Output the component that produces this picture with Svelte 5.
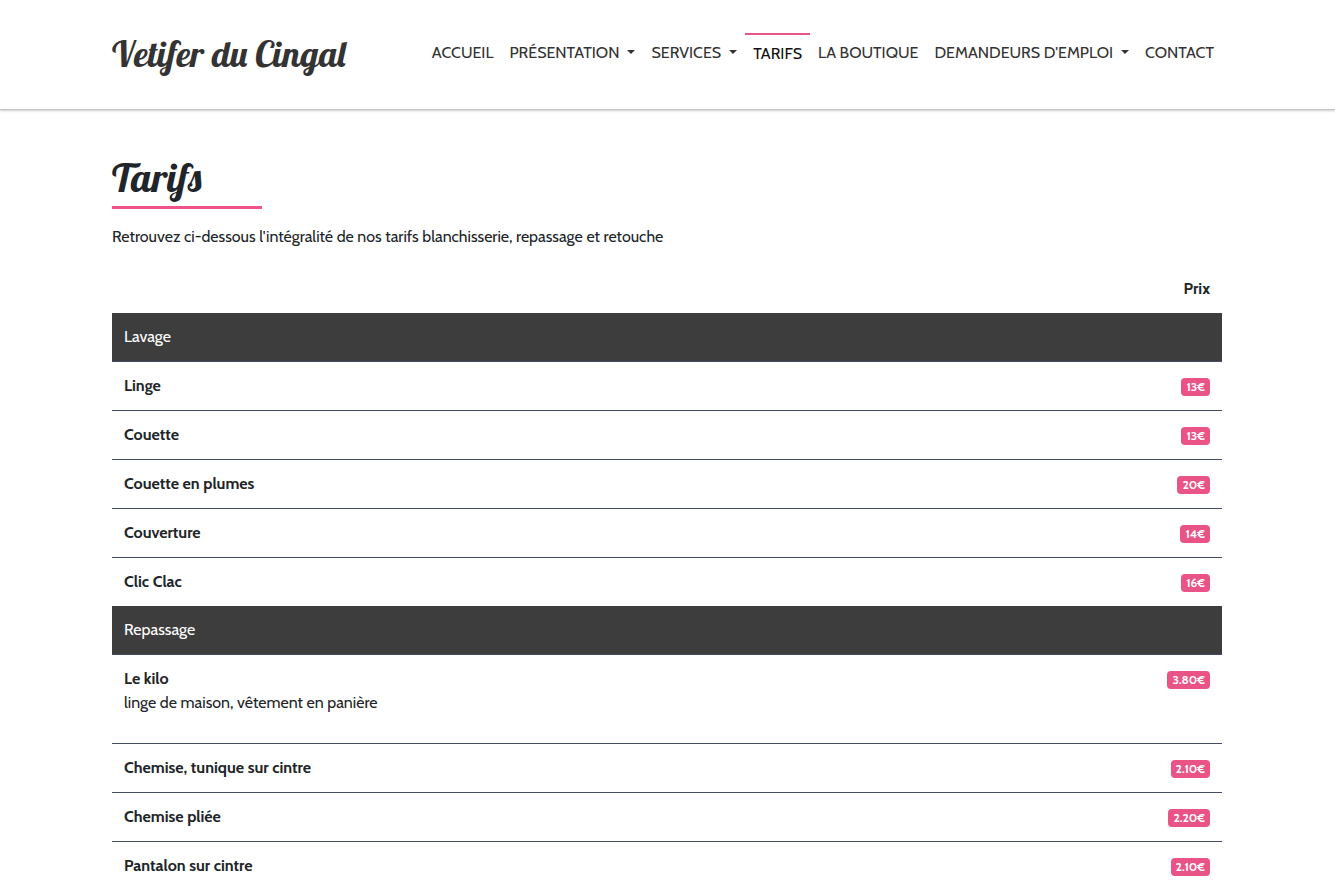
<script>
    const links = [
        { label: 'Accueil' },
        { label: 'Présentation', dropdown: true },
        { label: 'Services', dropdown: true },
        { label: 'Tarifs', active: true },
        { label: 'La boutique' },
        { label: "Demandeurs d'emploi", dropdown: true },
        { label: 'Contact' },
    ]

    const categories = [
        {
            name: 'Lavage',
            items: [
                { name: 'Linge', price: '13€' },
                { name: 'Couette', price: '13€' },
                { name: 'Couette en plumes', price: '20€' },
                { name: 'Couverture', price: '14€' },
                { name: 'Clic Clac', price: '16€' },
            ],
        },
        {
            name: 'Repassage',
            items: [
                { name: 'Le kilo', price: '3.80€', details: 'linge de maison, vêtement en panière' },
                { name: 'Chemise, tunique sur cintre', price: '2.10€' },
                { name: 'Chemise pliée', price: '2.20€' },
                { name: 'Pantalon sur cintre', price: '2.10€' },
            ],
        },
    ]
</script>

<style>
    :global(body) {
        margin: 0;
        background-color: #fff;
        color: #212529;
        font-family: Cabin, Lato, sans-serif;
        font-size: 16px;
        line-height: 24px;
    }

    .container {
        box-sizing: border-box;
        max-width: 1141px;
        margin: 0 auto;
        padding: 0 16px 0 15px;
    }

    .header {
        background-color: #fff;
        border-bottom: 1px solid #c4c4c4;
        box-shadow: 0 1px 2px rgba(0, 0, 0, 0.2);
    }

    .bar {
        display: flex;
        justify-content: space-between;
        align-items: flex-start;
        padding-top: 33px;
        padding-bottom: 35px;
    }

    .brand {
        color: #333;
        font-family: Lobster, "Liberation Serif", serif;
        font-size: 36px;
        line-height: 41px;
        text-decoration: none;
        white-space: nowrap;
    }

    .menu {
        display: flex;
        margin: 0;
        padding: 0;
        list-style: none;
    }

    .link {
        display: block;
        padding: 8px;
        color: #333;
        text-decoration: none;
        text-transform: uppercase;
        white-space: nowrap;
    }

    .active {
        border-top: 2px solid #ea5385;
        padding-top: 7px;
        color: #111;
    }

    .dropdown::after {
        content: "";
        display: inline-block;
        margin-left: 8px;
        vertical-align: 4px;
        border-top: 4px solid;
        border-right: 4px solid transparent;
        border-left: 4px solid transparent;
    }

    .main {
        padding-top: 43px;
    }

    .title {
        margin: 0;
        font-family: Lobster, "Liberation Serif", serif;
        font-size: 40px;
        font-weight: normal;
        line-height: 48px;
    }

    .title::after {
        content: "";
        display: block;
        width: 150px;
        height: 3px;
        margin-top: 5px;
        background-color: #f0528a;
    }

    .intro {
        margin: 16px 0;
    }

    .prices {
        width: 100%;
        border-collapse: collapse;
    }

    th, td {
        padding: 12px;
        text-align: left;
        vertical-align: top;
    }

    tbody th, tbody td {
        border-top: 1px solid #454d62;
    }

    .price {
        text-align: right;
    }

    tbody .category {
        border-top: 0;
        background-color: #3d3d3d;
        color: #fff;
        font-weight: normal;
    }

    .name {
        font-weight: bold;
    }

    .details {
        margin: 0 0 16px;
        font-weight: normal;
    }

    .badge {
        display: inline-block;
        padding: 3px 5px;
        border-radius: 4px;
        background-color: #ea5385;
        color: #fff;
        font-size: 12px;
        font-weight: bold;
        line-height: 12px;
        vertical-align: middle;
    }
</style>

<header class="header">
    <div class="container bar">
        <a class="brand" href="#accueil">Vetifer du Cingal</a>
        <nav>
            <ul class="menu">
                {#each links as link}
                    <li>
                        <a class="link" class:active={link.active} class:dropdown={link.dropdown} href="#menu">{link.label}</a>
                    </li>
                {/each}
            </ul>
        </nav>
    </div>
</header>

<main class="container main">
    <h1 class="title">Tarifs</h1>
    <p class="intro">Retrouvez ci-dessous l'intégralité de nos tarifs blanchisserie, repassage et retouche</p>

    <table class="prices">
        <thead>
            <tr>
                <td></td>
                <th class="price" scope="col">Prix</th>
            </tr>
        </thead>
        {#each categories as category}
            <tbody>
                <tr>
                    <th class="category" colspan="2" scope="rowgroup">{category.name}</th>
                </tr>
                {#each category.items as item}
                    <tr>
                        <th class="name" scope="row">
                            {item.name}
                            {#if item.details}
                                <p class="details">{item.details}</p>
                            {/if}
                        </th>
                        <td class="price"><span class="badge">{item.price}</span></td>
                    </tr>
                {/each}
            </tbody>
        {/each}
    </table>
</main>
